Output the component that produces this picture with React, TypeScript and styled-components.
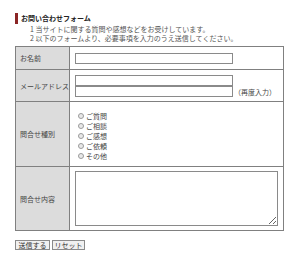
import styled, { createGlobalStyle } from "styled-components";

const GlobalStyle = createGlobalStyle`
  body {
    margin: 0;
    background: #fff;
    font-family: "Noto Sans CJK JP", "Noto Sans", sans-serif;
    color: #333;
  }
`;

const Page = styled.div`
  width: 268px;
  padding: 13px 0 0 15px;
`;

const Title = styled.h2`
  margin: 0;
  height: 11px;
  border-left: 3px solid #8b2525;
  padding-left: 3px;
  font-size: 7px;
  line-height: 11px;
  font-weight: bold;
  color: #222;
`;

const Notes = styled.ol`
  margin: 1px 0 4px 15px;
  padding: 0;
  list-style: none;
  font-size: 7px;
  line-height: 8.5px;
  color: #555;
`;

const Note = styled.li`
  white-space: nowrap;
`;

const Table = styled.table`
  width: 268px;
  border-collapse: collapse;
  border: 1px solid #808080;
  font-size: 7px;
`;

const Row = styled.tr<{ $h: number }>`
  height: ${(p) => p.$h}px;
`;

const Label = styled.th`
  width: 49px;
  padding: 0 0 0 4px;
  background: #dcdcdc;
  border: 1px solid #808080;
  text-align: left;
  font-weight: normal;
  color: #444;
  white-space: nowrap;
`;

const Cell = styled.td`
  padding: 4px 5px;
  border: 1px solid #808080;
  vertical-align: middle;
`;

const TextInput = styled.input`
  display: block;
  box-sizing: border-box;
  width: 158px;
  height: 11px;
  margin: 0;
  padding: 0;
  border: 1px solid #8a8a8a;
  background: #fff;
`;

const InputLine = styled.div`
  display: flex;
  align-items: flex-end;
  gap: 1px;
  color: #444;
`;

const Radios = styled.div`
  display: flex;
  flex-direction: column;
  padding: 5px 0 1px;
`;

const RadioLabel = styled.label`
  display: flex;
  align-items: center;
  gap: 2px;
  height: 10px;
  padding-left: 3px;
  color: #444;
`;

const Radio = styled.input`
  appearance: none;
  width: 6px;
  height: 6px;
  margin: 0;
  border: 1px solid #9a9a9a;
  border-radius: 50%;
  background: #e8e8e8;
`;

const TextArea = styled.textarea`
  display: block;
  box-sizing: border-box;
  width: 203px;
  height: 55px;
  margin: 0;
  border: 1px solid #8a8a8a;
`;

const Buttons = styled.div`
  display: flex;
  gap: 2px;
  margin-top: 9px;
`;

const Button = styled.button<{ $w: number }>`
  width: ${(p) => p.$w}px;
  height: 10px;
  padding: 0;
  border: 1px solid #8a8a8a;
  background: #f0f0f0;
  font-family: inherit;
  font-size: 7px;
  line-height: 8px;
  color: #333;
`;

const kinds = ["ご質問", "ご相談", "ご感想", "ご依頼", "その他"];

export default function App() {
  return (
    <>
      <GlobalStyle />
      <Page>
        <Title>お問い合わせフォーム</Title>
        <Notes>
          <Note>1 当サイトに関する質問や感想などをお受けしています。</Note>
          <Note>2 以下のフォームより、必要事項を入力のうえ送信してください。</Note>
        </Notes>
        <Table>
          <tbody>
            <Row $h={23}>
              <Label>お名前</Label>
              <Cell>
                <TextInput />
              </Cell>
            </Row>
            <Row $h={32}>
              <Label>メールアドレス</Label>
              <Cell>
                <TextInput />
                <InputLine>
                  <TextInput />
                  <span>（再度入力）</span>
                </InputLine>
              </Cell>
            </Row>
            <Row $h={62}>
              <Label>問合せ種別</Label>
              <Cell>
                <Radios>
                  {kinds.map((k) => (
                    <RadioLabel key={k}>
                      <Radio type="radio" name="kind" />
                      {k}
                    </RadioLabel>
                  ))}
                </Radios>
              </Cell>
            </Row>
            <Row $h={64}>
              <Label>問合せ内容</Label>
              <Cell>
                <TextArea />
              </Cell>
            </Row>
          </tbody>
        </Table>
        <Buttons>
          <Button $w={35}>送信する</Button>
          <Button $w={33}>リセット</Button>
        </Buttons>
      </Page>
    </>
  );
}
